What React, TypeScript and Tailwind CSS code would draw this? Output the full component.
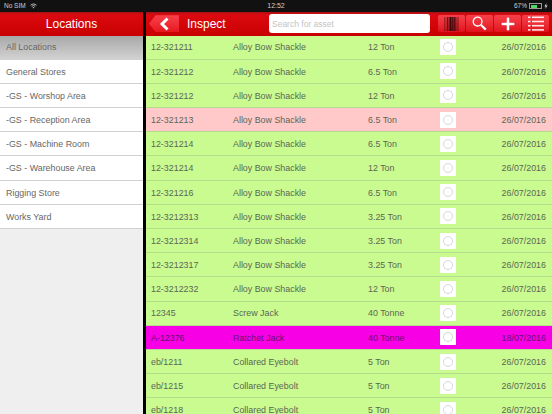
import { Plus } from 'lucide-react';

const locations = [
  'All Locations',
  'General Stores',
  '-GS - Worshop Area',
  '-GS - Reception Area',
  '-GS - Machine Room',
  '-GS - Warehouse Area',
  'Rigging Store',
  'Works Yard',
];

type Asset = { id: string; name: string; size: string; date: string; tone?: 'pink' | 'magenta' };

const assets: Asset[] = [
  { id: '12-321211', name: 'Alloy Bow Shackle', size: '12 Ton', date: '26/07/2016' },
  { id: '12-321212', name: 'Alloy Bow Shackle', size: '6.5 Ton', date: '26/07/2016' },
  { id: '12-321212', name: 'Alloy Bow Shackle', size: '12 Ton', date: '26/07/2016' },
  { id: '12-321213', name: 'Alloy Bow Shackle', size: '6.5 Ton', date: '26/07/2016', tone: 'pink' },
  { id: '12-321214', name: 'Alloy Bow Shackle', size: '6.5 Ton', date: '26/07/2016' },
  { id: '12-321214', name: 'Alloy Bow Shackle', size: '12 Ton', date: '26/07/2016' },
  { id: '12-321216', name: 'Alloy Bow Shackle', size: '6.5 Ton', date: '26/07/2016' },
  { id: '12-3212313', name: 'Alloy Bow Shackle', size: '3.25 Ton', date: '26/07/2016' },
  { id: '12-3212314', name: 'Alloy Bow Shackle', size: '3.25 Ton', date: '26/07/2016' },
  { id: '12-3212317', name: 'Alloy Bow Shackle', size: '3.25 Ton', date: '26/07/2016' },
  { id: '12-3212232', name: 'Alloy Bow Shackle', size: '12 Ton', date: '26/07/2016' },
  { id: '12345', name: 'Screw Jack', size: '40 Tonne', date: '26/07/2016' },
  { id: 'A-12376', name: 'Ratchet Jack', size: '40 Tonne', date: '18/07/2016', tone: 'magenta' },
  { id: 'eb/1211', name: 'Collared Eyebolt', size: '5 Ton', date: '26/07/2016' },
  { id: 'eb/1215', name: 'Collared Eyebolt', size: '5 Ton', date: '26/07/2016' },
  { id: 'eb/1218', name: 'Collared Eyebolt', size: '5 Ton', date: '26/07/2016' },
];

// x, width, opacity of each barcode stripe
const bars = [
  [0, 1, 0.35], [1.6, 0.7, 0.45], [3, 1.2, 0.7], [4.8, 0.8, 0.85], [6, 1.6, 0.95], [8.2, 0.8, 0.95],
  [9.4, 1.4, 0.9], [11.3, 0.8, 0.75], [12.6, 1, 0.5], [14.2, 0.8, 0.35],
];

const StatusBar = () => (
  <div className="flex h-3 shrink-0 items-center justify-between bg-[#111] pl-1 pr-1 text-[6.5px] text-[#ccc]">
    <div className="flex w-24 items-center gap-1">
      <span>No SIM</span>
      <svg width="7" height="6" viewBox="0 0 14 11" fill="none" stroke="#ccc" strokeWidth="1.8">
        <path d="M1 4a8.5 8.5 0 0 1 12 0M3.4 6.4a5 5 0 0 1 7.2 0" />
        <path d="M7 10.5 5.2 8.4a2.6 2.6 0 0 1 3.6 0Z" fill="#ccc" stroke="none" />
      </svg>
    </div>
    <span className="text-[7px]">12:52</span>
    <div className="flex w-24 items-center justify-end gap-[2px]">
      <span>67%</span>
      <div className="flex h-[6px] w-[13px] items-stretch border border-[#999] p-[0.5px]">
        <div className="w-[67%] bg-[#4cd964]" />
      </div>
      <svg width="4" height="6" viewBox="0 0 4 6" fill="#ccc">
        <path d="M2.4 0 .4 3.4h1.3L1.4 6l2.2-3.6H2.2Z" />
      </svg>
    </div>
  </div>
);

const ToolButton = ({ children }: { children: React.ReactNode }) => (
  <button className="flex h-[17px] w-[27px] items-center justify-center rounded-[2px] bg-gradient-to-b from-[#f8404a] to-[#e0101c]">
    {children}
  </button>
);

const Sidebar = () => (
  <aside className="flex w-[143px] shrink-0 flex-col bg-[#efefef]">
    <div className="flex h-[23.5px] shrink-0 items-center justify-center bg-gradient-to-b from-[#a80f14] via-[#dc0a10] via-[12%] to-[#c80000] text-[12px] text-white">
      Locations
    </div>
    {locations.map((name, i) => (
      <div
        key={name}
        className={`flex h-[24.2px] shrink-0 items-center border-b border-[#d0d0d0] pl-[6px] pt-[2px] text-[8.9px] text-[#666] ${
          i === 0 ? 'bg-gradient-to-b from-[#a8a8a8] to-[#d2d2d2]' : 'bg-white'
        }`}
      >
        {name}
      </div>
    ))}
  </aside>
);

const Row = ({ asset }: { asset: Asset }) => {
  const bg =
    asset.tone === 'pink' ? 'bg-[#ffc9c9]' : asset.tone === 'magenta' ? 'bg-[#f700e6]' : 'bg-[#c9fb90]';
  const text = asset.tone === 'magenta' ? 'text-[#6a1070]' : 'text-[#5c6655]';
  return (
    <div className={`flex h-[24.2px] shrink-0 items-center border-b border-[#b4dc8c] pl-[5px] pr-[6px] text-[8.9px] ${bg} ${text}`}>
      <span className="w-[82px] shrink-0 pt-[2px]">{asset.id}</span>
      <span className="w-[135px] shrink-0 pt-[2px]">{asset.name}</span>
      <span className="w-[72px] shrink-0 pt-[2px]">{asset.size}</span>
      <div className="flex h-[16px] w-[16px] shrink-0 items-center justify-center bg-white">
        <div className="h-[10px] w-[10px] rounded-full border border-[#d4d8dc]" />
      </div>
      <span className="ml-auto pt-[2px]">{asset.date}</span>
    </div>
  );
};

export default function App() {
  return (
    <div className="flex h-[414px] w-[552px] flex-col overflow-hidden bg-black font-['Liberation_Sans',sans-serif]">
      <StatusBar />
      <div className="flex min-h-0 flex-1 gap-[3px]">
        <Sidebar />
        <main className="flex min-w-0 flex-1 flex-col">
          <div className="flex h-[23.5px] shrink-0 items-center bg-gradient-to-b from-[#a80f14] via-[#dc0a10] via-[12%] to-[#c80000] px-[3px]">
            <button className="flex h-[17px] w-[30px] items-center justify-center bg-gradient-to-b from-[#f8404a] to-[#e8141e] [clip-path:polygon(22%_0,100%_0,100%_100%,22%_100%,0_50%)]">
              <svg width="11" height="14" viewBox="0 0 11 14" fill="none" stroke="white" strokeWidth="3">
                <path d="M8.5 1.5 3 7l5.5 5.5" />
              </svg>
            </button>
            <span className="ml-[8px] w-[82px] text-[12px] text-white">Inspect</span>
            <input
              placeholder="Search for asset"
              readOnly
              className="h-[19px] w-[161px] rounded-[3px] bg-white px-[3px] text-[8.5px] placeholder:text-[#c4c4c4]"
            />
            <div className="ml-auto flex gap-px">
              <ToolButton>
                <svg width="16" height="14" viewBox="0 0 16 14" fill="#2a0406">
                  {bars.map(([x, w, o]) => (
                    <rect key={x} x={x} y="0" width={w} height="14" opacity={o} />
                  ))}
                </svg>
              </ToolButton>
              <ToolButton>
                <svg width="15" height="15" viewBox="0 0 15 15" fill="none" stroke="white">
                  <circle cx="5.6" cy="5.6" r="4.4" strokeWidth="1.3" />
                  <path d="M9 9l4.8 4.6" strokeWidth="2.2" />
                </svg>
              </ToolButton>
              <ToolButton>
                <Plus size={18} strokeWidth={3.4} color="white" />
              </ToolButton>
              <ToolButton>
                <svg width="16" height="15" viewBox="0 0 16 15" fill="#ffe6e6">
                  <rect x="0" y="0.5" width="2.5" height="1.6" />
                  <rect x="4" y="0.5" width="12" height="1.6" />
                  <rect x="0" y="4.7" width="2.5" height="1.6" />
                  <rect x="4" y="4.7" width="12" height="1.6" />
                  <rect x="0" y="8.9" width="2.5" height="1.6" />
                  <rect x="4" y="8.9" width="12" height="1.6" />
                  <rect x="0" y="13.1" width="2.5" height="1.6" />
                  <rect x="4" y="13.1" width="12" height="1.6" />
                </svg>
              </ToolButton>
            </div>
          </div>
          <div className="flex min-h-0 flex-1 flex-col overflow-hidden">
            {assets.map((asset, i) => (
              <Row key={i} asset={asset} />
            ))}
          </div>
        </main>
      </div>
    </div>
  );
}
